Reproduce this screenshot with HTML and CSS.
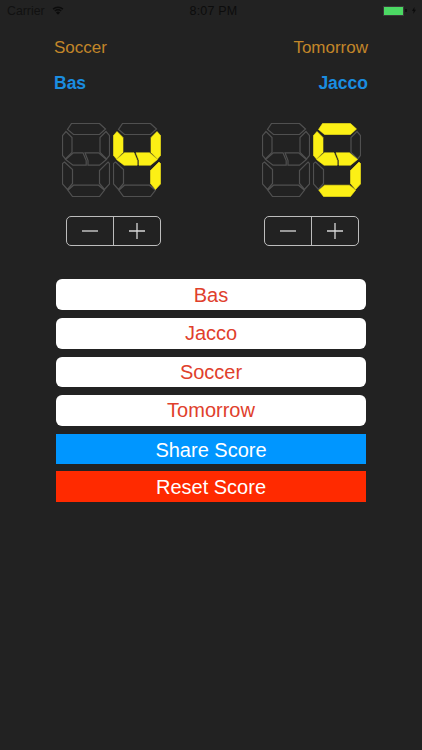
FILE: index.html
```html
<!DOCTYPE html>
<html lang="en">
<head>
<meta charset="utf-8">
<title>Score</title>
<link rel="stylesheet" href="styles.css">
</head>
<body>
<svg class="defs" width="0" height="0" aria-hidden="true">
  <defs>
    <g id="seg-a"><polygon points="9,0 37,0 43,5.500 37,11 11,11 5,6"/></g>
    <g id="seg-b"><polygon points="43.500,8 47,12 47,32 44,35.500 37.500,29 37.500,14"/></g>
    <g id="seg-c"><polygon points="45.500,38.500 47,40 47,60.500 42,66 37,60 37,47"/></g>
    <g id="seg-d"><polygon points="11,61.700 36,61.700 42,66.700 37,73 10,73 5.300,66.700"/></g>
    <g id="seg-e"><polygon points="2,38.500 10,46 10,60 5,66 0,60.500 0,40"/></g>
    <g id="seg-f"><polygon points="3.500,8 9.500,14 9.500,29 3,35.500 0,32 0,12"/></g>
    <g id="seg-g1"><polygon points="3,36 11,29.300 20.500,29.300 23.700,37 23.700,41.700 10.500,41.700"/></g>
    <g id="seg-g2"><polygon points="22.500,29.300 36,29.300 44,36 37,41.700 25.500,41.700 25.500,37"/></g>
  </defs>
</svg>
<div class="status">
  <div class="status-left">
    <span>Carrier</span>
    <svg class="wifi" viewBox="0 0 14 10" aria-hidden="true"><path d="M7 10 4.600 7.200a3.600 3.600 0 0 1 4.800 0Z"/><path d="M3.800 6.300 2.700 5a6.400 6.400 0 0 1 8.600 0l-1.100 1.300a4.800 4.800 0 0 0-6.400 0Z"/><path d="M1.900 4.100 .7 2.800a9.300 9.300 0 0 1 12.600 0l-1.200 1.300a7.600 7.600 0 0 0-10.200 0Z"/></svg>
  </div>
  <span class="status-time">8:07 PM</span>
  <div class="status-right">
    <span class="battery"></span>
    <span class="battery-tip"></span>
    <svg class="bolt" viewBox="0 0 5 9" aria-hidden="true"><path d="M3 0 0 5h2L1.600 9 5 3.600H3Z"/></svg>
  </div>
</div>
<main class="board">
  <div class="row row-info"><span>Soccer</span><span>Tomorrow</span></div>
  <div class="row row-names"><span>Bas</span><span>Jacco</span></div>
  <div class="scores">
    <section class="team team-left">
      <div class="digits">
        <svg class="digit" viewBox="-0.500 -0.500 48 74" aria-hidden="true"><g class="off"><use href="#seg-a"/><use href="#seg-b"/><use href="#seg-c"/><use href="#seg-d"/><use href="#seg-e"/><use href="#seg-f"/><use href="#seg-g1"/><use href="#seg-g2"/></g></svg>
        <svg class="digit" viewBox="-0.500 -0.500 48 74" aria-hidden="true"><g class="off"><use href="#seg-a"/><use href="#seg-d"/><use href="#seg-e"/></g><g class="on"><use href="#seg-b"/><use href="#seg-c"/><use href="#seg-f"/><use href="#seg-g1"/><use href="#seg-g2"/></g></svg>
      </div>
      <div class="stepper"><span class="step"><svg viewBox="0 0 16 16" aria-hidden="true"><path d="M0 8h16"/></svg></span><span class="step"><svg viewBox="0 0 16 16" aria-hidden="true"><path d="M0 8h16M8 0v16"/></svg></span></div>
    </section>
    <section class="team team-right">
      <div class="digits">
        <svg class="digit" viewBox="-0.500 -0.500 48 74" aria-hidden="true"><g class="off"><use href="#seg-a"/><use href="#seg-b"/><use href="#seg-c"/><use href="#seg-d"/><use href="#seg-e"/><use href="#seg-f"/><use href="#seg-g1"/><use href="#seg-g2"/></g></svg>
        <svg class="digit" viewBox="-0.500 -0.500 48 74" aria-hidden="true"><g class="off"><use href="#seg-b"/><use href="#seg-e"/></g><g class="on"><use href="#seg-a"/><use href="#seg-c"/><use href="#seg-d"/><use href="#seg-f"/><use href="#seg-g1"/><use href="#seg-g2"/></g></svg>
      </div>
      <div class="stepper"><span class="step"><svg viewBox="0 0 16 16" aria-hidden="true"><path d="M0 8h16"/></svg></span><span class="step"><svg viewBox="0 0 16 16" aria-hidden="true"><path d="M0 8h16M8 0v16"/></svg></span></div>
    </section>
  </div>
  <div class="actions">
    <button class="btn btn-light">Bas</button>
    <button class="btn btn-light">Jacco</button>
    <button class="btn btn-light">Soccer</button>
    <button class="btn btn-light">Tomorrow</button>
    <button class="btn btn-share">Share Score</button>
    <button class="btn btn-reset">Reset Score</button>
  </div>
</main>
</body>
</html>
```
FILE: styles.css
```css
* { box-sizing: border-box; }
html, body { margin: 0; padding: 0; }
body {
  width: 422px;
  height: 750px;
  overflow: hidden;
  background: #222222;
  font-family: "Liberation Sans", Arial, sans-serif;
}
.defs { display: block; height: 0; }

.status {
  height: 21px;
  display: grid;
  grid-template-columns: 1fr auto 1fr;
  align-items: center;
  padding: 0 6px 0 7px;
  color: #0c0c0c;
  font-size: 12.300px;
}
.status-left { display: flex; align-items: center; gap: 7px; color: #111; }
.wifi { width: 12px; height: 9px; fill: #0c0c0c; margin-top: -1px; }
.status-time { font-size: 12.500px; letter-spacing: 0.200px; color: #0c0c0c; padding-left: 4px; }
.status-right { display: flex; align-items: center; justify-content: flex-end; }
.battery { display: block; width: 21px; height: 10px; background: #4cd964; border: 1px solid #3a3a3a; }
.battery-tip { display: block; width: 2px; height: 3px; background: #111; margin: 0 5px 0 1px; }
.bolt { width: 4px; height: 9px; fill: #0c0c0c; }

.board { padding-top: 15px; }
.row {
  display: flex;
  justify-content: space-between;
  padding: 0 54px;
}
.row-info { height: 24px; align-items: center; color: #c28629; font-size: 17px; }
.row-names { height: 24px; margin-top: 11px; align-items: center; color: #1a8de0; font-size: 17.500px; font-weight: 700; }

.scores {
  display: flex;
  justify-content: space-between;
  padding: 0 61px 0 62px;
  margin-top: 28px;
}
.team { display: flex; flex-direction: column; width: 99px; }
.digits { display: flex; justify-content: space-between; }
.digit { display: block; width: 48px; height: 74px; }
.digit .off { fill: none; stroke: #505050; stroke-width: 1.200; }
.digit .on { fill: #fcf015; stroke: #fcf015; stroke-width: 0.600; stroke-linejoin: round; }

.stepper {
  display: flex;
  width: 95px;
  height: 30px;
  margin-top: 19px;
  border: 1px solid #bdbdbd;
  border-radius: 5px;
}
.team-left .stepper { align-self: flex-end; }
.team-right .stepper { align-self: center; }
.step { flex: 1; display: flex; align-items: center; justify-content: center; }
.step + .step { border-left: 1px solid #bdbdbd; }
.step svg { width: 16px; height: 16px; fill: none; stroke: #d8d8d8; stroke-width: 1.300; }

.actions {
  display: flex;
  flex-direction: column;
  gap: 7.900px;
  padding: 0 56px;
  margin-top: 33.400px;
}
.btn {
  display: block;
  width: 100%;
  height: 30.700px;
  padding: 0;
  border: 0;
  font-family: inherit;
  font-size: 20px;
  line-height: 30px;
  text-align: center;
}
.btn-light { background: #ffffff; color: #e0402c; border-radius: 6px; }
.btn-share { background: #0096ff; color: #ffffff; padding-top: 1px; }
.btn-reset { background: #ff2a00; color: #ffffff; margin-top: -1px; padding-top: 1px; }
```
